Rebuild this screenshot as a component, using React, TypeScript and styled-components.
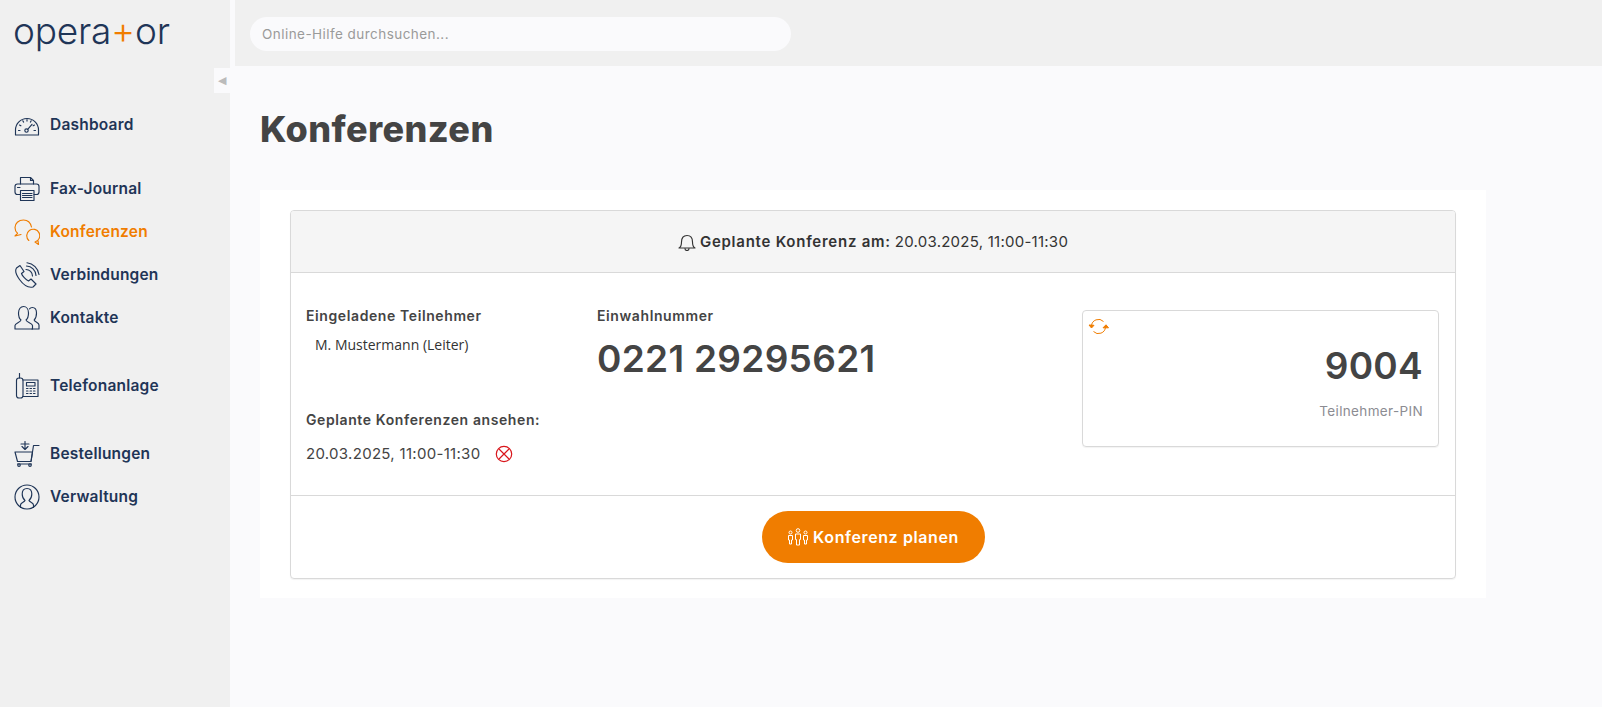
import React from "react";
import styled, { createGlobalStyle } from "styled-components";

const Global = createGlobalStyle`
  html, body { margin: 0; padding: 0; height: 100%; }
  body { font-family: Inter, "Open Sans", "Liberation Sans", sans-serif; background: #fafafc; color: #444; }
  #root { height: 100%; }
`;

const Page = styled.div`
  display: grid;
  grid-template-columns: 230px 1fr;
  height: 707px;
  overflow: hidden;
`;

const Sidebar = styled.aside`
  position: relative;
  background: #f0f0f0;
  display: flex;
  flex-direction: column;
`;

const Logo = styled.div`
  font-family: Inter, Lato, sans-serif;
  font-weight: 300;
  font-size: 37px;
  line-height: 40px;
  letter-spacing: -0.25px;
  color: #1f3557;
  padding: 11px 0 0 13px;
  height: 53px;
  span { color: #f07d00; }
`;

const Collapse = styled.button`
  position: absolute;
  top: 68px;
  left: 214px;
  width: 18px;
  height: 25px;
  padding: 0 3px 0 0;
  border: 0;
  background: #fafafc;
  color: #bbb;
  font-size: 11px;
  line-height: 25px;
`;

const Nav = styled.nav`
  display: flex;
  flex-direction: column;
  margin-top: 39px;
`;

const Group = styled.div<{ $gap: number }>`
  display: flex;
  flex-direction: column;
  margin-bottom: ${(p) => p.$gap}px;
`;

const Item = styled.a<{ $active?: boolean }>`
  display: flex;
  align-items: center;
  gap: 10px;
  height: 43px;
  padding-left: 14px;
  font-size: 15.5px;
  font-weight: 600;
  letter-spacing: 0.2px;
  color: ${(p) => (p.$active ? "#f07d00" : "#1f3557")};
  svg { flex: none; width: 26px; height: 26px; }
`;

const Main = styled.main`
  display: flex;
  flex-direction: column;
  min-width: 0;
`;

const TopBar = styled.header`
  height: 66px;
  margin-left: 5px;
  background: #f0f0f0;
  display: flex;
  align-items: center;
  padding: 2px 0 0 15px;
  box-sizing: border-box;
`;

const Search = styled.div`
  width: 541px;
  height: 34px;
  border-radius: 17px;
  background: #fafafc;
  color: #9a9a9a;
  font-size: 13.5px;
  line-height: 34px;
  padding-left: 12px;
  box-sizing: border-box;
  letter-spacing: 0.45px;
`;

const Content = styled.div`
  padding: 0 116px 0 30px;
  display: flex;
  flex-direction: column;
`;

const Title = styled.h1`
  margin: 40px 0 0;
  height: 84px;
  font-size: 36px;
  line-height: 46px;
  font-weight: 800;
  letter-spacing: 0.4px;
  color: #444;
`;

const Panel = styled.section`
  background: #fff;
  padding: 20px 30px 19px 30px;
`;

const Card = styled.div`
  border: 1px solid #d9d9d9;
  border-radius: 4px;
  box-shadow: 0 1px 1px rgba(0, 0, 0, 0.05);
  display: flex;
  flex-direction: column;
  height: 369px;
  box-sizing: border-box;
`;

const CardHead = styled.div`
  height: 61px;
  flex: none;
  background: #f5f5f5;
  border-bottom: 1px solid #d9d9d9;
  border-radius: 3px 3px 0 0;
  display: flex;
  align-items: center;
  justify-content: center;
  gap: 4px;
  font-size: 15px;
  letter-spacing: 0.25px;
  color: #333;
  b { font-weight: 600; letter-spacing: 0.75px; }
`;

const CardBody = styled.div`
  flex: 1;
  display: grid;
  grid-template-columns: 291px 1fr 357px;
  padding: 0 16px 0 15px;
`;

const Col = styled.div`
  padding-top: 33px;
  display: flex;
  flex-direction: column;
`;

const Label = styled.div`
  font-size: 14px;
  line-height: 20px;
  font-weight: 600;
  letter-spacing: 0.6px;
  color: #444;
`;

const Person = styled.div`
  font-size: 14px;
  line-height: 20px;
  margin: 9px 0 0 9px;
  color: #333;
  font-family: "Open Sans", sans-serif;
`;

const Planned = styled(Label)`
  margin-top: 55px;
`;

const DateRow = styled.div`
  display: flex;
  align-items: center;
  gap: 15px;
  margin-top: 14px;
  font-size: 15px;
  line-height: 20px;
  letter-spacing: 0.3px;
  color: #444;
`;

const Number = styled.div`
  font-size: 37px;
  line-height: 46px;
  font-weight: 600;
  letter-spacing: 0.3px;
  margin-top: 10px;
  color: #444;
`;

const PinCol = styled.div`
  padding-top: 37px;
`;

const PinBox = styled.div`
  position: relative;
  height: 137px;
  box-sizing: border-box;
  border: 1px solid #d9d9d9;
  border-radius: 4px;
  box-shadow: 0 1px 1px rgba(0, 0, 0, 0.05);
  padding: 33px 15px 0;
  text-align: right;
`;

const Refresh = styled.span`
  position: absolute;
  top: 6px;
  left: 5px;
  width: 21px;
  height: 19px;
  display: block;
`;

const Pin = styled.div`
  font-size: 37px;
  line-height: 44px;
  font-weight: 600;
  letter-spacing: 0.3px;
  color: #444;
`;

const PinLabel = styled.div`
  margin-top: 13px;
  font-size: 13.5px;
  line-height: 20px;
  letter-spacing: 0.35px;
  color: #8c8c92;
`;

const CardFoot = styled.div`
  height: 83px;
  flex: none;
  border-top: 1px solid #d9d9d9;
  display: flex;
  justify-content: center;
  padding-top: 15px;
  box-sizing: border-box;
`;

const PlanButton = styled.button`
  width: 223px;
  height: 52px;
  border: 0;
  border-radius: 26px;
  background: #f07d00;
  color: #fff;
  font-family: inherit;
  font-size: 16px;
  font-weight: 600;
  letter-spacing: 0.6px;
  display: flex;
  align-items: center;
  justify-content: center;
  gap: 4px;
`;

const S = { fill: "none", stroke: "currentColor", strokeWidth: 1.15, strokeLinecap: "round" as const, strokeLinejoin: "round" as const };

const Gauge = () => (
  <svg viewBox="0 0 26 26" {...S}>
    <path d="M1.500 23v-5a11.500 11.500 0 0 1 23 0v5z" />
    <path d="M4.500 18.500h1.500M5.500 13l1.400.8M8.800 8.800l.8 1.300M13 7.500v1.600M17.200 8.800l-.8 1.300M20.500 13l-1.400.8M20 18.500h1.500" />
    <circle cx="12.500" cy="18.500" r="1.700" />
    <path d="M13.700 17.300l4.300-5" />
  </svg>
);
const Printer = () => (
  <svg viewBox="0 0 26 26" {...S}>
    <path d="M6.500 8V1.500h10l3 3V8M16.500 1.500v3h3" />
    <path d="M6.500 18.500H3.500A2.500 2.500 0 0 1 1 16v-5.500A2.500 2.500 0 0 1 3.500 8h19a2.500 2.500 0 0 1 2.500 2.500V16a2.500 2.500 0 0 1-2.500 2.500H20" />
    <path d="M6.500 14.500h13.500v10H6.500zM8.500 17.500h9.500M8.500 19.500h9.500M8.500 21.500h9.500M3.500 11.500h2.500" />
  </svg>
);
const Chat = () => (
  <svg viewBox="0 0 26 26" {...S}>
    <path d="M17.500 8C16.500 3.500 13.500 1 9.500 1 4.500 1 1 4.500 1 8.500c0 2.500 1 4.500 2.500 5.800L1 17l6-1.500" />
    <path d="M14.800 21.500A6.500 6.500 0 1 1 21 23l3.500 2.500-.5-4" />
  </svg>
);
const Phone = () => (
  <svg viewBox="0 0 26 26" {...S}>
    <path d="M2.500 6 6 3.500l4 6-2.500 2c.5 2 4.500 6.500 7 7.500l2.500-2 5 5-3 3c-4.500 1-9.500-2-13.500-7.500S.5 9 2.500 6z" />
    <path d="M12 7.500a6.500 6.500 0 0 1 6.500 6.500M12.500 4a10 10 0 0 1 9.500 9.500M13 .8A13.500 13.500 0 0 1 25 12.500" />
  </svg>
);
const Users = () => (
  <svg viewBox="0 0 26 26" {...S}>
    <path d="M1 24v-3.500c0-2.500 5.500-3 6-5.500-2-1.500-2.500-4-2.500-7 0-4 2.200-6.500 5-6.500s5 2.500 5 6.500c0 3-.5 5.500-2.500 7 .5 2.500 6.500 3 6.500 5.500V24z" />
    <path d="M15.500 3.800c.8-1 1.700-1.300 2.800-1.300 2.800 0 4.200 2.300 4.200 5.500 0 3-.5 5.300-2.300 7 .5 2.200 4.800 2.700 4.800 5V24H18" />
  </svg>
);
const DeskPhone = () => (
  <svg viewBox="0 0 26 26" {...S}>
    <rect x="2.500" y="5" width="6.500" height="20" rx="2.500" />
    <path d="M5.500 5V.5" />
    <path d="M9 7h15v16.500H9" />
    <rect x="12.500" y="9.500" width="8.500" height="3.500" />
    <path d="M12.500 15.500h1.500M16 15.500h1.500M19.500 15.500h1.500M12.500 18h1.500M16 18h1.500M19.500 18h1.500M12.500 20.500h1.500M16 20.500h1.500M19.500 20.500h1.500" strokeWidth="1.200" />
  </svg>
);
const Cart = () => (
  <svg viewBox="0 0 26 26" {...S}>
    <path d="M1 11h17.500L17 20.500H3.500z" />
    <path d="M17 20.500 19.500 4.500H25M3.500 23h14" />
    <circle cx="5" cy="24" r="1.300" />
    <circle cx="16" cy="24" r="1.300" />
    <path d="M11 0.500V8M8 5.500 11 8.500l3-3M7 3h8" />
  </svg>
);
const Admin = () => (
  <svg viewBox="0 0 26 26" {...S}>
    <circle cx="13" cy="13" r="12" />
    <path d="M6.500 23.500V21c0-2.500 3.800-2.800 4.500-4.500-1.700-1.500-2.800-3.800-2.800-6.500 0-3.500 2-5.500 4.800-5.500s4.800 2 4.800 5.500c0 2.700-1.100 5-2.800 6.500.7 1.700 4.500 2 4.500 4.500v2.500" />
  </svg>
);
const Bell = () => (
  <svg viewBox="0 0 18 18" width="18" height="18" {...S} stroke="#333">
    <path d="M1 15c2-1 2.500-3 2.500-6 0-4 2-6.500 5.500-6.500s5.500 2.500 5.500 6.500c0 3 .5 5 2.500 6z" />
    <path d="M7 15.500a2 2 0 0 0 4 0" />
  </svg>
);
const Cancel = () => (
  <svg viewBox="0 0 18 18" width="18" height="18" fill="none" stroke="#d9161c" strokeWidth="1.200">
    <circle cx="9" cy="9" r="7.700" />
    <path d="M4 4l10 10M14 4 4 14" />
  </svg>
);
const Sync = () => (
  <svg viewBox="0 0 21 19" width="21" height="19" fill="none" stroke="#f07d00" strokeWidth="1">
    <path d="M3.500 9a7 7 0 0 1 12-4.500" />
    <path d="M17.500 10a7 7 0 0 1-12 4.500" />
    <path d="M1 8l2.500 3L6 8.300z M15 10.800l3-3 2.500 3z" fill="#f07d00" />
  </svg>
);
const Team = () => (
  <svg viewBox="0 0 22 18" width="22" height="18" fill="none" stroke="#fff" strokeWidth="1">
    <circle cx="11" cy="2.500" r="1.800" />
    <circle cx="3.500" cy="4.500" r="1.500" />
    <circle cx="18.500" cy="4.500" r="1.500" />
    <path d="M8.500 6h5v5.500h-1v5.500h-3v-5.500h-1zM1.500 7.500h4v4.500h-1v4h-2v-4h-1zM16.500 7.500h4v4.500h-1v4h-2v-4h-1z" />
  </svg>
);

export default function App() {
  return (
    <Page>
      <Global />
      <Sidebar>
        <Logo>opera<span>+</span>or</Logo>
        <Collapse aria-label="Menü einklappen">◀</Collapse>
        <Nav>
          <Group $gap={21}>
            <Item><Gauge />Dashboard</Item>
          </Group>
          <Group $gap={25}>
            <Item><Printer />Fax-Journal</Item>
            <Item $active><Chat />Konferenzen</Item>
            <Item><Phone />Verbindungen</Item>
            <Item><Users />Kontakte</Item>
          </Group>
          <Group $gap={25}>
            <Item><DeskPhone />Telefonanlage</Item>
          </Group>
          <Group $gap={0}>
            <Item><Cart />Bestellungen</Item>
            <Item><Admin />Verwaltung</Item>
          </Group>
        </Nav>
      </Sidebar>
      <Main>
        <TopBar>
          <Search>Online-Hilfe durchsuchen...</Search>
        </TopBar>
        <Content>
          <Title>Konferenzen</Title>
          <Panel>
            <Card>
              <CardHead>
                <Bell />
                <b>Geplante Konferenz am:</b> 20.03.2025, 11:00-11:30
              </CardHead>
              <CardBody>
                <Col>
                  <Label>Eingeladene Teilnehmer</Label>
                  <Person>M. Mustermann (Leiter)</Person>
                  <Planned>Geplante Konferenzen ansehen:</Planned>
                  <DateRow>20.03.2025, 11:00-11:30 <Cancel /></DateRow>
                </Col>
                <Col>
                  <Label>Einwahlnummer</Label>
                  <Number>0221 29295621</Number>
                </Col>
                <PinCol>
                  <PinBox>
                    <Refresh><Sync /></Refresh>
                    <Pin>9004</Pin>
                    <PinLabel>Teilnehmer-PIN</PinLabel>
                  </PinBox>
                </PinCol>
              </CardBody>
              <CardFoot>
                <PlanButton><Team />Konferenz planen</PlanButton>
              </CardFoot>
            </Card>
          </Panel>
        </Content>
      </Main>
    </Page>
  );
}
